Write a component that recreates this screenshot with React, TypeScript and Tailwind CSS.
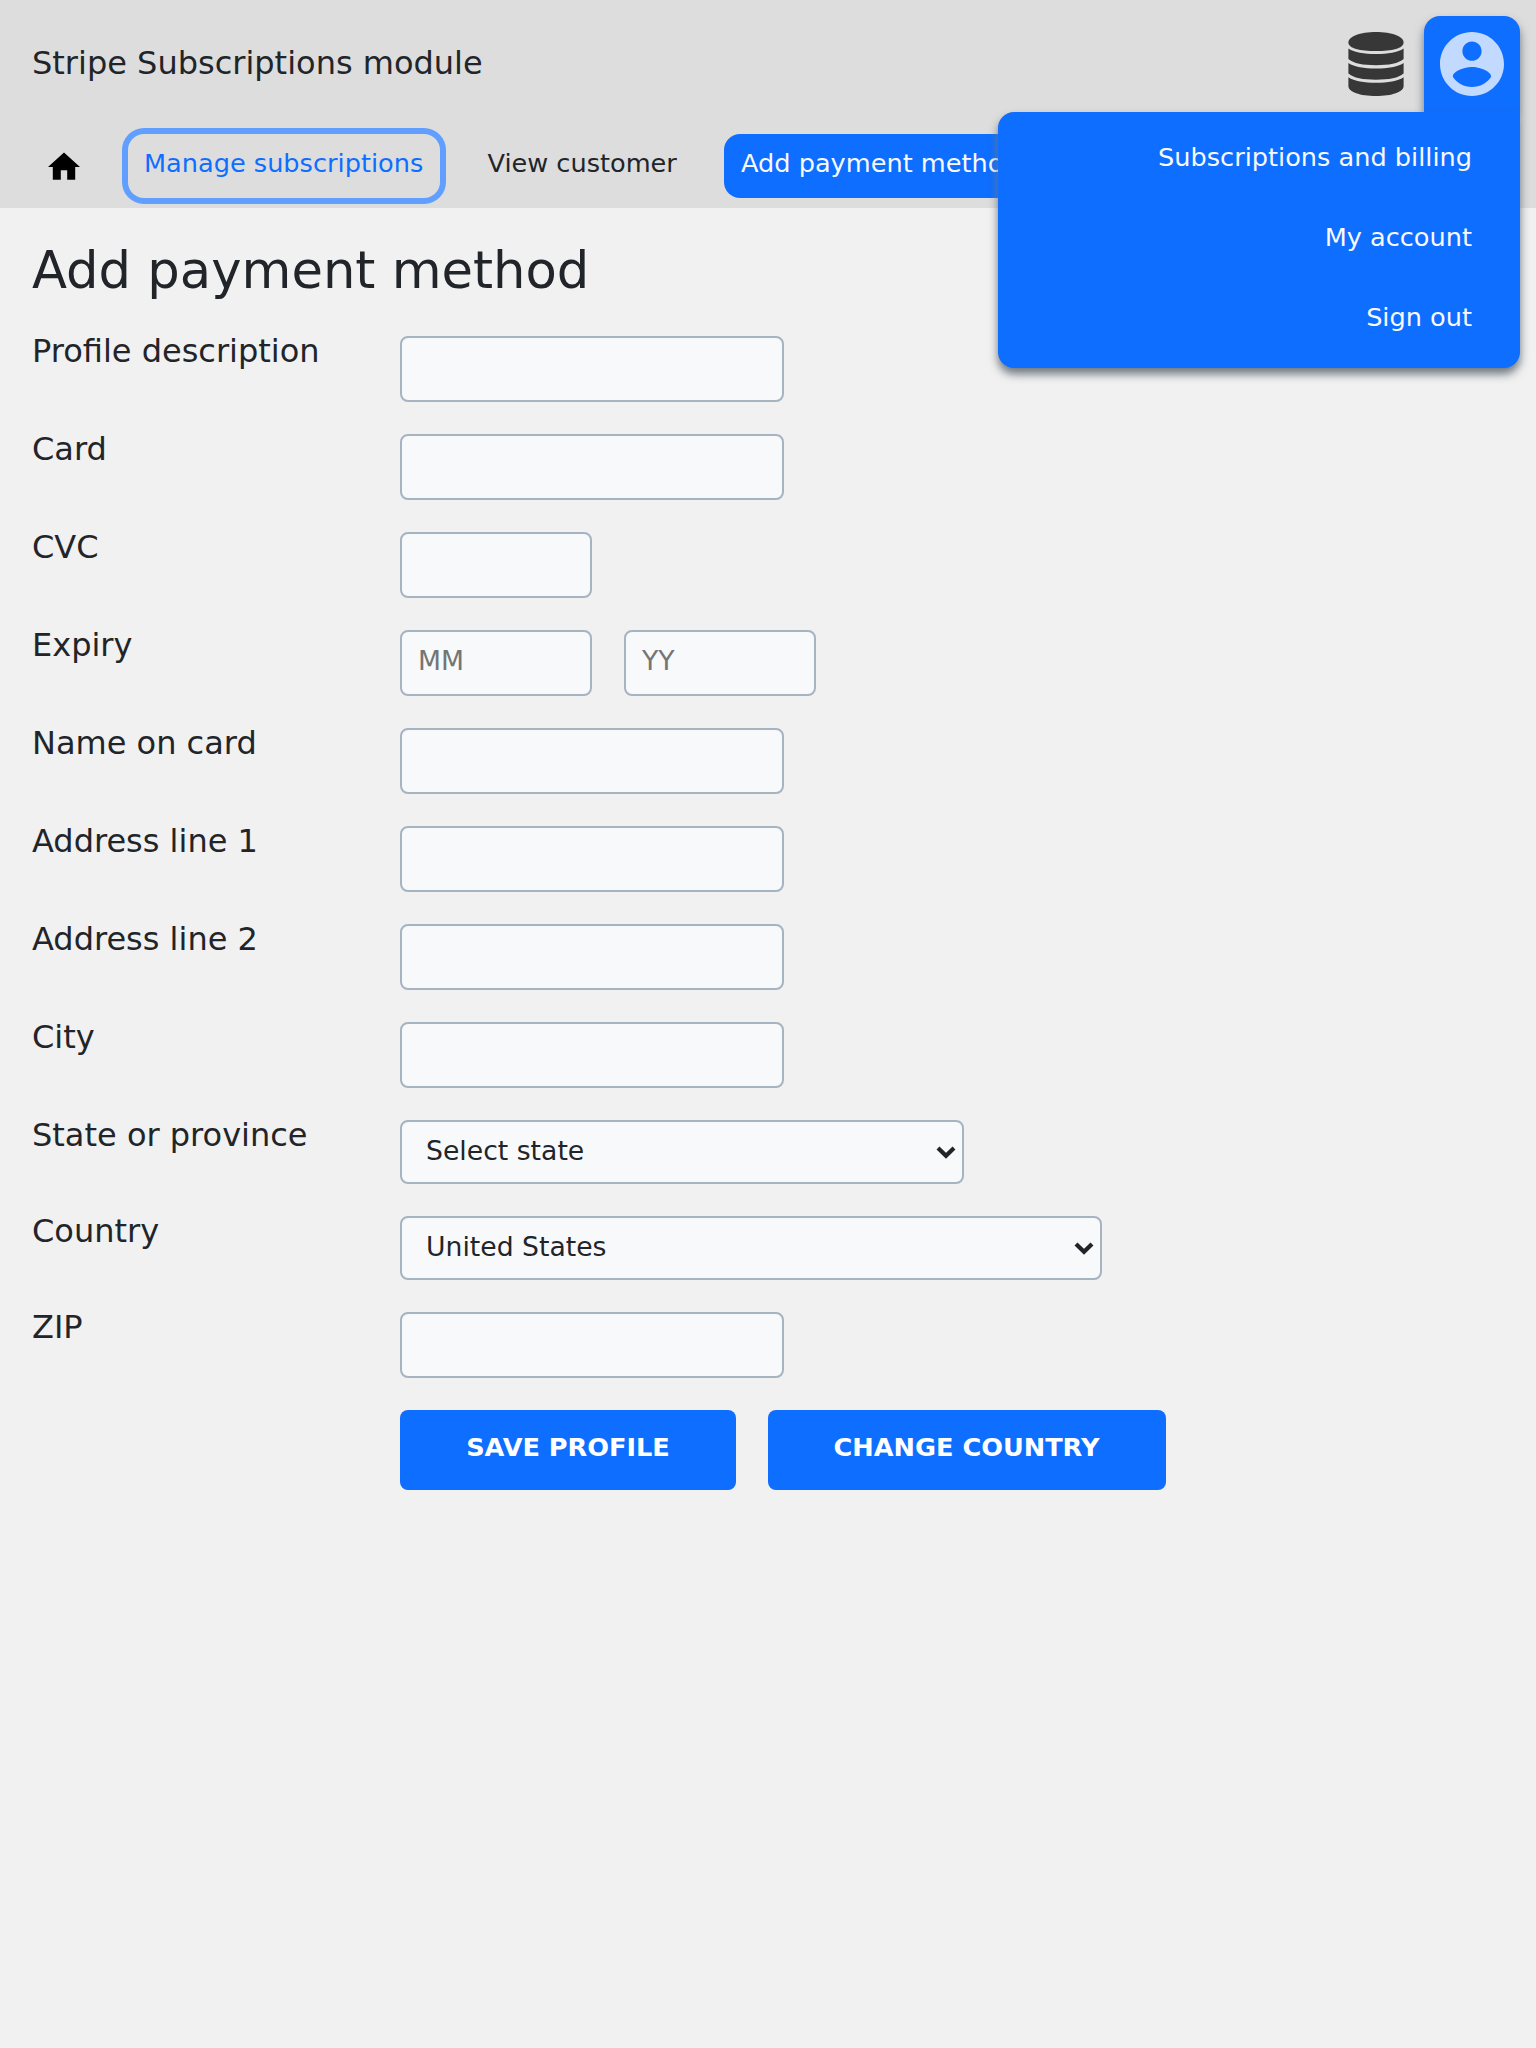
import React from 'react';

type RowProps = { label: string; children: React.ReactNode };

const font = "font-['DejaVu_Sans',sans-serif]";
const box = 'h-[66px] rounded-lg border-2 border-[#a6b3c1] bg-[#f8f9fb] px-4 pb-[5px] text-[26.67px] text-[#212529] placeholder:text-[#757575]';

function TextInput({ wide = false, placeholder }: { wide?: boolean; placeholder?: string }) {
  return <input placeholder={placeholder} className={`${box} ${wide ? 'w-[384px]' : 'w-48'}`} />;
}

function Row({ label, children }: RowProps) {
  return (
    <div className="flex">
      <label className="h-8 w-[368px] text-[32px] leading-[30px]">{label}</label>
      <div className="flex gap-8">{children}</div>
    </div>
  );
}

function Select({ value, className }: { value: string; className: string }) {
  return (
    <button className={`flex h-16 items-center justify-between rounded-lg border-2 border-[#a6b3c1] bg-[#f8f9fb] pr-1.5 pl-6 text-[26.67px] ${className}`}>
      <span className="mb-px leading-none">{value}</span>
      <svg className="h-[13px] w-5" viewBox="0 0 20 13" fill="none" stroke="#212529" strokeWidth="4.2">
        <path d="M2 2 10 9.800 18 2" />
      </svg>
    </button>
  );
}

function NavItem({ children, className = 'px-4' }: { children: React.ReactNode; className?: string }) {
  return <a className={`block h-16 shrink-0 rounded-2xl text-[25.6px] leading-[58px] whitespace-nowrap ${className}`}>{children}</a>;
}

export default function App() {
  return (
    <div className={`relative min-h-[2048px] w-full overflow-hidden bg-[#f1f1f1] text-[#212529] ${font}`}>
      <header className="h-[208px] bg-[#ddd]">
        <div className="flex h-28 justify-between pt-4 pr-4 pl-8">
          <div className="text-[32px] leading-[94px]">Stripe Subscriptions module</div>
          <div className="flex">
            <div className="flex h-24 w-24 justify-center pt-4">
              <svg className="h-16 w-16" viewBox="0 0 64 64" fill="#373737">
                <path d="M4.400 10.500C4.400 4.500 16 0 32 0s27.600 4.500 27.600 10.500S48 19 32 19 4.400 16.500 4.400 10.500z" />
                <path d="M4.400 16.500c6 4 15.600 5.500 27.600 5.500s21.600-1.500 27.600-5.500v10.500c-5 4.500-14.600 6.200-27.600 6.200S9.400 31.500 4.400 27z" />
                <path d="M4.400 31c6 4 15.600 5.500 27.600 5.500s21.600-1.500 27.600-5.500v10.500c-5 4.500-14.600 6.200-27.600 6.200S9.400 46 4.400 41.500z" />
                <path d="M4.400 45.300c6 4 15.600 5.500 27.600 5.500s21.600-1.500 27.600-5.500V54c0 6-11.600 10-27.600 10S4.400 60 4.400 54z" />
              </svg>
            </div>
            <div className="h-24 w-24 rounded-t-2xl bg-[#0d6eff] p-4 shadow-[0_6px_10px_#6c757d]">
              <svg className="h-16 w-16" viewBox="2 2 20 20" fill="#c2daff">
                <path d="M12 2C6.480 2 2 6.480 2 12s4.480 10 10 10 10-4.480 10-10S17.520 2 12 2zm0 3c1.660 0 3 1.340 3 3s-1.340 3-3 3-3-1.340-3-3 1.340-3 3-3zm0 14.200c-2.500 0-4.710-1.280-6-3.220.03-1.990 4-3.080 6-3.080 1.990 0 5.970 1.090 6 3.080-1.290 1.940-3.500 3.220-6 3.220z" />
              </svg>
            </div>
          </div>
        </div>
        <nav className="flex gap-8 pt-[22px] pl-8">
          <NavItem>
            <svg className="mt-[17px] h-8 w-8" viewBox="2 2 20 20" fill="#000">
              <path d="M10 20v-6h4v6h5v-8h3L12 3 2 12h3v8z" />
            </svg>
          </NavItem>
          <NavItem className="w-[312px] pl-4 text-[#0d6eff] shadow-[0_0_0_6px_#609fff]">Manage subscriptions</NavItem>
          <NavItem className="w-[220px] pl-[15.500px]">View customer</NavItem>
          <NavItem className="bg-[#0d6eff] pr-4 pl-[17px] text-[#f8f9fb]">Add payment method</NavItem>
        </nav>
      </header>

      <div className="absolute top-28 right-4 flex h-64 w-[522px] flex-col rounded-2xl rounded-tr-none bg-[#0d6eff] pt-[5px] pr-12 text-right text-[25.6px] leading-[80px] text-[#f8f9fb] shadow-[0_6px_10px_#6c757d]">
        <a>Subscriptions and billing</a>
        <a>My account</a>
        <a>Sign out</a>
      </div>

      <main className="flex flex-col gap-8 px-8">
        <h1 className="h-24 pt-8 text-[51.2px] leading-[60px]">Add payment method</h1>
        <Row label="Profile description"><TextInput wide /></Row>
        <Row label="Card"><TextInput wide /></Row>
        <Row label="CVC"><TextInput /></Row>
        <Row label="Expiry">
          <TextInput placeholder="MM" />
          <TextInput placeholder="YY" />
        </Row>
        <Row label="Name on card"><TextInput wide /></Row>
        <Row label="Address line 1"><TextInput wide /></Row>
        <Row label="Address line 2"><TextInput wide /></Row>
        <Row label="City"><TextInput wide /></Row>
        <Row label="State or province"><Select value="Select state" className="w-[564px]" /></Row>
        <Row label="Country"><Select value="United States" className="w-[702px]" /></Row>
        <Row label="ZIP"><TextInput wide /></Row>
        <div className="flex gap-8 pl-[368px] text-[25.6px] leading-[74px] font-bold text-white">
          <button className="h-20 w-[336px] rounded-lg bg-[#0d6eff] pb-1.5">SAVE PROFILE</button>
          <button className="h-20 w-[398px] rounded-lg bg-[#0d6eff] pr-1 pb-1.5 pl-[3px]">CHANGE COUNTRY</button>
        </div>
      </main>
    </div>
  );
}
